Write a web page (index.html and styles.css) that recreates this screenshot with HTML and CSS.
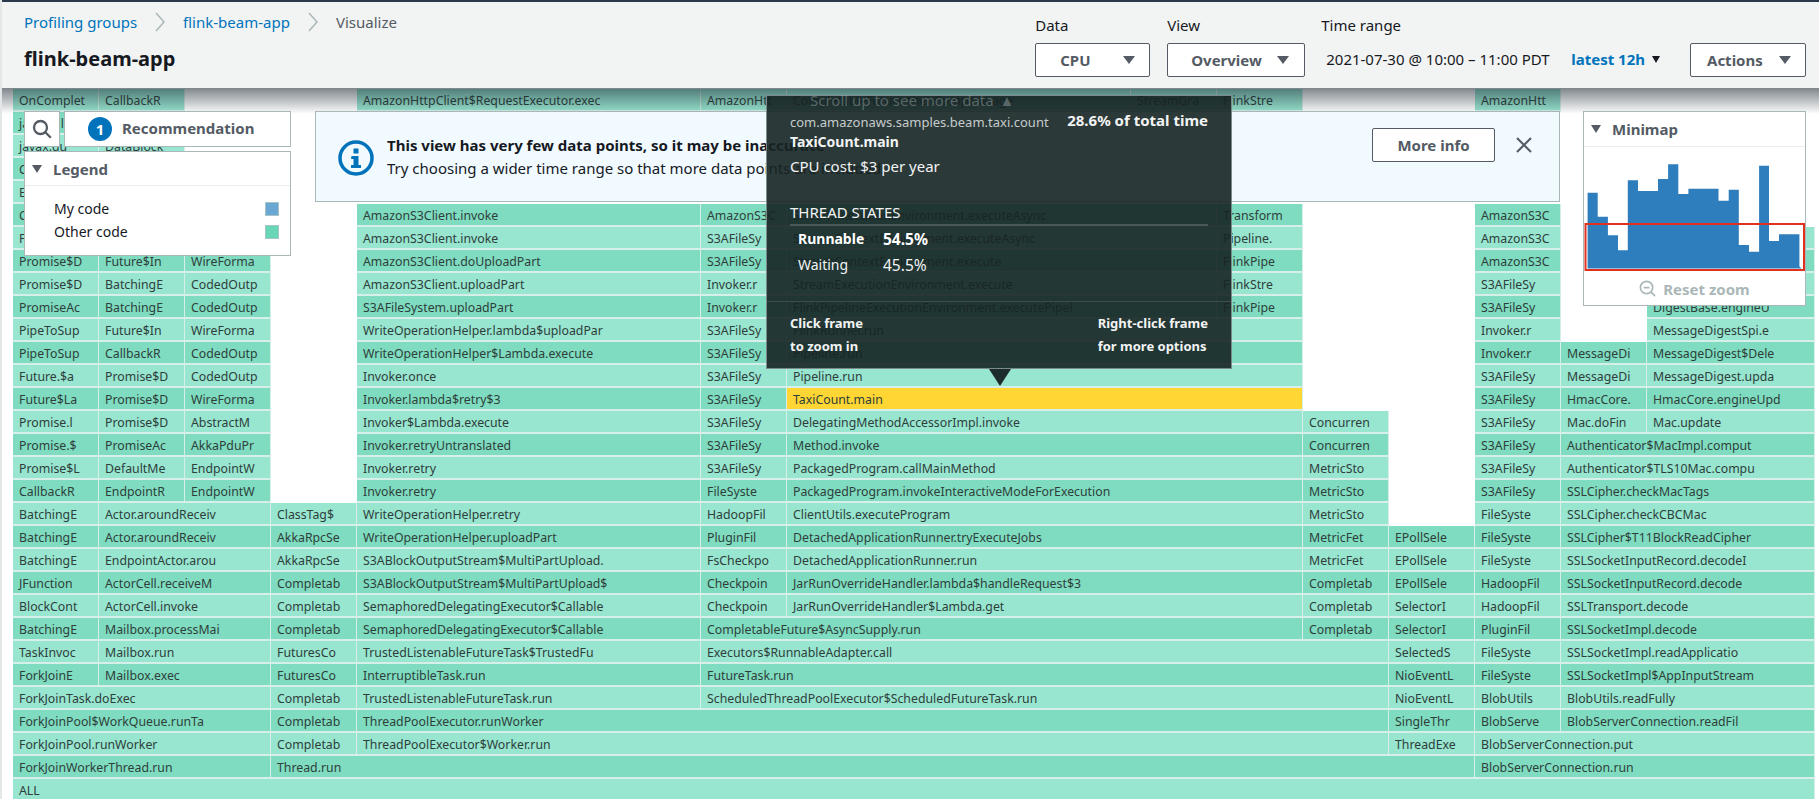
FILE: index.html
```html
<!DOCTYPE html>
<html lang="en">
<head>
  <meta charset="UTF-8" />
  <title>flink-beam-app</title>
  <link rel="stylesheet" href="styles.css">
</head>
<body>

  <header class="top">
    <div class="top-left">
      <nav class="crumbs">
        <a href="#">Profiling groups</a>
        <svg class="chev" viewBox="0 0 10 20"><path d="M1 1l8 9-8 9"/></svg>
        <a href="#">flink-beam-app</a>
        <svg class="chev" viewBox="0 0 10 20"><path d="M1 1l8 9-8 9"/></svg>
        <span>Visualize</span>
      </nav>
      <h1>flink-beam-app</h1>
    </div>
    <div class="controls">
      <div class="field">
        <label>Data</label>
        <button class="btn sel-data">CPU <i class="caret"></i></button>
      </div>
      <div class="field">
        <label>View</label>
        <button class="btn sel-view">Overview <i class="caret"></i></button>
      </div>
      <div class="field">
        <label>Time range</label>
        <div class="range">
          <span class="dates">2021-07-30 @ 10:00 – 11:00 PDT</span>
          <a href="#" class="latest">latest 12h</a>
          <i class="caret dark"></i>
        </div>
      </div>
      <button class="btn actions">Actions <i class="caret"></i></button>
    </div>
  </header>

  <main class="flame">
    <div class="row"><b>OnComplet</b><b>CallbackR</b><i class="s2"></i><b>AmazonHttpClient$RequestExecutor.exec</b><b>AmazonHtt</b><b>CompletableFuture.thenCompose.age</b><b>StreamGra</b><b>FlinkStre</b><i class="s2"></i><b>AmazonHtt</b></div>
    <div class="row"><b>java.util</b><b>DataBlock</b></div>
    <div class="row"><b>javax.du</b><b>DataBlock</b></div>
    <div class="row"><b>CallbackR</b><b>Future$In</b></div>
    <div class="row"><b>EndpointW</b><b>Future$In</b></div>
    <div class="row"><b>CallbackR</b><b>Future$In</b><b>CodedOutp</b><i></i><b>AmazonS3Client.invoke</b><b>AmazonS3C</b><b class="s2">StreamExecutionEnvironment.executeAsync</b><b>Transform</b><i class="s2"></i><b>AmazonS3C</b></div>
    <div class="row"><b>Future$In</b><b>Future$In</b><b>CodedOutp</b><i></i><b>AmazonS3Client.invoke</b><b>S3AFileSy</b><b class="s2">StreamContextEnvironment.executeAsync</b><b>Pipeline.</b><i class="s2"></i><b>AmazonS3C</b><i></i><b>DigestBase</b></div>
    <div class="row"><b>Promise$D</b><b>Future$In</b><b>WireForma</b><i></i><b>AmazonS3Client.doUploadPart</b><b>S3AFileSy</b><b class="s2">StreamContextEnvironment.execute</b><b>FlinkPipe</b><i class="s2"></i><b>AmazonS3C</b><i></i><b>DigestBase</b></div>
    <div class="row"><b>Promise$D</b><b>BatchingE</b><b>CodedOutp</b><i></i><b>AmazonS3Client.uploadPart</b><b>Invoker.r</b><b class="s2">StreamExecutionEnvironment.execute</b><b>FlinkStre</b><i class="s2"></i><b>S3AFileSy</b><i></i><b>DigestBase</b></div>
    <div class="row"><b>PromiseAc</b><b>BatchingE</b><b>CodedOutp</b><i></i><b>S3AFileSystem.uploadPart</b><b>Invoker.r</b><b class="s2">FlinkPipelineExecutionEnvironment.executePipel</b><b>FlinkPipe</b><i class="s2"></i><b>S3AFileSy</b><i></i><b>DigestBase.engineU</b></div>
    <div class="row"><b>PipeToSup</b><b>Future$In</b><b>WireForma</b><i></i><b>WriteOperationHelper.lambda$uploadPar</b><b>S3AFileSy</b><b class="s3">FlinkRunner.run</b><i class="s2"></i><b>Invoker.r</b><i></i><b>MessageDigestSpi.e</b></div>
    <div class="row"><b>PipeToSup</b><b>CallbackR</b><b>CodedOutp</b><i></i><b>WriteOperationHelper$Lambda.execute</b><b>S3AFileSy</b><b class="s3">Pipeline.run</b><i class="s2"></i><b>Invoker.r</b><b>MessageDi</b><b>MessageDigest$Dele</b></div>
    <div class="row"><b>Future.$a</b><b>Promise$D</b><b>CodedOutp</b><i></i><b>Invoker.once</b><b>S3AFileSy</b><b class="s3">Pipeline.run</b><i class="s2"></i><b>S3AFileSy</b><b>MessageDi</b><b>MessageDigest.upda</b></div>
    <div class="row"><b>Future$La</b><b>Promise$D</b><b>WireForma</b><i></i><b>Invoker.lambda$retry$3</b><b>S3AFileSy</b><b class="s3 hit">TaxiCount.main</b><i class="s2"></i><b>S3AFileSy</b><b>HmacCore.</b><b>HmacCore.engineUpd</b></div>
    <div class="row"><b>Promise.l</b><b>Promise$D</b><b>AbstractM</b><i></i><b>Invoker$Lambda.execute</b><b>S3AFileSy</b><b class="s3">DelegatingMethodAccessorImpl.invoke</b><b>Concurren</b><i></i><b>S3AFileSy</b><b>Mac.doFin</b><b>Mac.update</b></div>
    <div class="row"><b>Promise.$</b><b>PromiseAc</b><b>AkkaPduPr</b><i></i><b>Invoker.retryUntranslated</b><b>S3AFileSy</b><b class="s3">Method.invoke</b><b>Concurren</b><i></i><b>S3AFileSy</b><b class="s2">Authenticator$MacImpl.comput</b></div>
    <div class="row"><b>Promise$L</b><b>DefaultMe</b><b>EndpointW</b><i></i><b>Invoker.retry</b><b>S3AFileSy</b><b class="s3">PackagedProgram.callMainMethod</b><b>MetricSto</b><i></i><b>S3AFileSy</b><b class="s2">Authenticator$TLS10Mac.compu</b></div>
    <div class="row"><b>CallbackR</b><b>EndpointR</b><b>EndpointW</b><i></i><b>Invoker.retry</b><b>FileSyste</b><b class="s3">PackagedProgram.invokeInteractiveModeForExecution</b><b>MetricSto</b><i></i><b>S3AFileSy</b><b class="s2">SSLCipher.checkMacTags</b></div>
    <div class="row"><b>BatchingE</b><b class="s2">Actor.aroundReceiv</b><b>ClassTag$</b><b>WriteOperationHelper.retry</b><b>HadoopFil</b><b class="s3">ClientUtils.executeProgram</b><b>MetricSto</b><i></i><b>FileSyste</b><b class="s2">SSLCipher.checkCBCMac</b></div>
    <div class="row"><b>BatchingE</b><b class="s2">Actor.aroundReceiv</b><b>AkkaRpcSe</b><b>WriteOperationHelper.uploadPart</b><b>PluginFil</b><b class="s3">DetachedApplicationRunner.tryExecuteJobs</b><b>MetricFet</b><b>EPollSele</b><b>FileSyste</b><b class="s2">SSLCipher$T11BlockReadCipher</b></div>
    <div class="row"><b>BatchingE</b><b class="s2">EndpointActor.arou</b><b>AkkaRpcSe</b><b>S3ABlockOutputStream$MultiPartUpload.</b><b>FsCheckpo</b><b class="s3">DetachedApplicationRunner.run</b><b>MetricFet</b><b>EPollSele</b><b>FileSyste</b><b class="s2">SSLSocketInputRecord.decodeI</b></div>
    <div class="row"><b>JFunction</b><b class="s2">ActorCell.receiveM</b><b>Completab</b><b>S3ABlockOutputStream$MultiPartUpload$</b><b>Checkpoin</b><b class="s3">JarRunOverrideHandler.lambda$handleRequest$3</b><b>Completab</b><b>EPollSele</b><b>HadoopFil</b><b class="s2">SSLSocketInputRecord.decode</b></div>
    <div class="row"><b>BlockCont</b><b class="s2">ActorCell.invoke</b><b>Completab</b><b>SemaphoredDelegatingExecutor$Callable</b><b>Checkpoin</b><b class="s3">JarRunOverrideHandler$Lambda.get</b><b>Completab</b><b>SelectorI</b><b>HadoopFil</b><b class="s2">SSLTransport.decode</b></div>
    <div class="row"><b>BatchingE</b><b class="s2">Mailbox.processMai</b><b>Completab</b><b>SemaphoredDelegatingExecutor$Callable</b><b class="s4">CompletableFuture$AsyncSupply.run</b><b>Completab</b><b>SelectorI</b><b>PluginFil</b><b class="s2">SSLSocketImpl.decode</b></div>
    <div class="row"><b>TaskInvoc</b><b class="s2">Mailbox.run</b><b>FuturesCo</b><b>TrustedListenableFutureTask$TrustedFu</b><b class="s5">Executors$RunnableAdapter.call</b><b>SelectedS</b><b>FileSyste</b><b class="s2">SSLSocketImpl.readApplicatio</b></div>
    <div class="row"><b>ForkJoinE</b><b class="s2">Mailbox.exec</b><b>FuturesCo</b><b>InterruptibleTask.run</b><b class="s5">FutureTask.run</b><b>NioEventL</b><b>FileSyste</b><b class="s2">SSLSocketImpl$AppInputStream</b></div>
    <div class="row"><b class="s3">ForkJoinTask.doExec</b><b>Completab</b><b>TrustedListenableFutureTask.run</b><b class="s5">ScheduledThreadPoolExecutor$ScheduledFutureTask.run</b><b>NioEventL</b><b>BlobUtils</b><b class="s2">BlobUtils.readFully</b></div>
    <div class="row"><b class="s3">ForkJoinPool$WorkQueue.runTa</b><b>Completab</b><b class="s6">ThreadPoolExecutor.runWorker</b><b>SingleThr</b><b>BlobServe</b><b class="s2">BlobServerConnection.readFil</b></div>
    <div class="row"><b class="s3">ForkJoinPool.runWorker</b><b>Completab</b><b class="s6">ThreadPoolExecutor$Worker.run</b><b>ThreadExe</b><b class="s3">BlobServerConnection.put</b></div>
    <div class="row"><b class="s3">ForkJoinWorkerThread.run</b><b class="s8">Thread.run</b><b class="s3">BlobServerConnection.run</b></div>
    <div class="row"><b class="s14">ALL</b></div>
  </main>

  <div class="shade"></div>

  <div class="float-left">
    <div class="float-top">
      <button class="box search">
        <svg viewBox="0 0 20 20" width="20" height="20"><circle cx="8.500" cy="8.500" r="6.500"/><path d="M13.300 13.300l5.500 5.500"/></svg>
      </button>
      <div class="box reco"><span class="count">1</span><span class="reco-text">Recommendation</span></div>
    </div>
    <section class="box legend">
      <div class="panel-head"><i class="caret"></i>Legend</div>
      <div class="legend-body">
        <div class="legend-row">My code<i class="swatch mine"></i></div>
        <div class="legend-row">Other code<i class="swatch other"></i></div>
      </div>
    </section>
  </div>

  <div class="banner">
    <svg class="info" viewBox="0 0 36 36" width="36" height="36">
      <circle cx="18" cy="18" r="16" />
      <rect x="15.500" y="8.500" width="5" height="5" />
      <path d="M13.500 16h7v9h2.500v3h-10v-3h2.500v-6h-2.500z" />
    </svg>
    <div class="banner-text">
      <strong>This view has very few data points, so it may be inaccurate</strong>
      <span>Try choosing a wider time range so that more data points are included.</span>
    </div>
    <button class="btn more">More info</button>
    <svg class="close" viewBox="0 0 16 16" width="16" height="16"><path d="M1 1l14 14M15 1L1 15"/></svg>
  </div>

  <div class="tip">
    <div class="tip-main">
      <div class="tip-head">
        <span class="tip-pkg">com.amazonaws.samples.beam.taxi.count</span>
        <span class="tip-pct">28.6% of total time</span>
      </div>
      <div class="tip-name">TaxiCount.main</div>
      <div class="tip-cost">CPU cost: $3 per year</div>
      <div class="tip-states">THREAD STATES</div>
      <div class="tip-state on"><span>Runnable</span><span class="tip-val">54.5%</span></div>
      <div class="tip-state"><span>Waiting</span><span class="tip-val">45.5%</span></div>
    </div>
    <div class="tip-foot">
      <span>Click frame<br>to zoom in</span>
      <span>Right-click frame<br>for more options</span>
    </div>
  </div>

  <div class="scroll-note">Scroll up to see more data <span class="up">▲</span></div>

  <section class="box minimap">
    <div class="panel-head"><i class="caret"></i>Minimap</div>
    <div class="map">
      <svg viewBox="0 0 222 125" width="222" height="125">
        <path class="bars" d="M3.600 121.500V45.700H13.700V69.700H23.900V88.300H34V103.300H43.800V33.300H54V44H74V32H84.100V17.300H94.300V47H104.400V41.700H134.500V53.700H144.700V42.700H154.800V98H165V104.700H175.100V18.700H185V94H195V87.300H215.400V119.500L217.500 121.500Z"/>
        <rect class="zoomed" x="1.500" y="77" width="218.500" height="46"/>
      </svg>
    </div>
    <div class="reset">
      <svg viewBox="0 0 18 18" width="17" height="17"><circle cx="8" cy="8" r="6.500"/><path d="M12.800 12.800L17 17M5 8h6"/></svg>
      Reset zoom
    </div>
  </section>

</body>
</html>
```

FILE: styles.css
```css
* {
  box-sizing: border-box;
}

html, body {
  height: 100%;
}

body {
  margin: 0;
  height: 799px;
  overflow: hidden;
  position: relative;
  background: #fff;
  font-family: "Noto Sans", sans-serif;
  font-size: 15px;
  color: #16191f;
  border-left: 2px solid #e4e7e7;
}

/* header */

.top {
  height: 88px;
  display: flex;
  justify-content: space-between;
  background: #f2f3f3;
  border-top: 2px solid #2a3a4c;
  padding: 0 13px 0 22px;
  position: relative;
  z-index: 3;
}

.crumbs {
  display: flex;
  align-items: center;
  gap: 18px;
  height: 20px;
  margin-top: 10px;
  color: #545b64;
}

.crumbs a, .latest {
  color: #0073bb;
  text-decoration: none;
}

.chev {
  width: 10px;
  height: 20px;
  fill: none;
  stroke: #aab7b8;
  stroke-width: 1.500;
}

h1 {
  margin: 15px 0 0;
  font-size: 20px;
  font-weight: 700;
  line-height: 24px;
}

.controls {
  display: flex;
  align-items: flex-start;
}

.field {
  margin-right: 16px;
}

.field:first-child {
  margin-right: 17px;
}

.field label {
  display: block;
  height: 18px;
  margin: 14px 0 9px;
  line-height: 18px;
}

.btn {
  height: 34px;
  background: #fff;
  border: 1px solid #545b64;
  border-radius: 2px;
  font: 700 15px "Noto Sans", sans-serif;
  color: #545b64;
}

.sel-data, .sel-view, .actions {
  display: flex;
  align-items: center;
  justify-content: space-between;
}

.sel-data {
  width: 115px;
  padding: 0 14px 0 24px;
}

.sel-view {
  width: 138px;
  padding: 0 15px 0 23px;
}

.actions {
  width: 116px;
  margin: 41px 0 0 14px;
  padding: 0 14px 0 16px;
}

.caret {
  display: inline-block;
  width: 0;
  height: 0;
  border-left: 6px solid transparent;
  border-right: 6px solid transparent;
  border-top: 8px solid #545b64;
}

.caret.dark {
  border-left-width: 4.500px;
  border-right-width: 4.500px;
  border-top: 7px solid #16191f;
}

.range {
  display: flex;
  align-items: center;
  height: 32px;
  padding-left: 5px;
}

.dates {
  width: 245px;
}

.latest {
  font-weight: 700;
  margin-right: 7px;
}

/* flame graph */

.flame {
  margin-left: 11px;
  padding-top: 1px;
  width: 1802px;
}

.row {
  display: grid;
  grid-template-columns: repeat(4, 86px) 344px 86px 344px repeat(6, 86px) 168px;
  height: 23px;
}

.row b {
  display: block;
  overflow: hidden;
  white-space: nowrap;
  height: 23px;
  padding-left: 6px;
  font-size: 12.300px;
  font-weight: 400;
  line-height: 23px;
  color: #2e3f3b;
  background: #98e5d0;
  border-right: 1px solid #d6efe8;
  border-bottom: 2px solid #d6efe8;
}

.row:nth-child(even) b {
  background: #7fdcc0;
}

.flame .row b.hit {
  background: #ffd633;
}

.row .s2 { grid-column: span 2; }
.row .s3 { grid-column: span 3; }
.row .s4 { grid-column: span 4; }
.row .s5 { grid-column: span 5; }
.row .s6 { grid-column: span 6; }
.row .s8 { grid-column: span 8; }
.row .s14 { grid-column: span 14; }

.shade {
  position: absolute;
  left: 0;
  right: 0;
  top: 88px;
  height: 26px;
  background: linear-gradient(rgba(22, 35, 45, .55), rgba(22, 35, 45, 0));
  z-index: 1;
}

/* floating panels */

.box {
  background: #fff;
  border: 1px solid #aab7b8;
}

.float-left {
  position: absolute;
  left: 22px;
  top: 111px;
  width: 267px;
  z-index: 2;
}

.float-top {
  display: flex;
  gap: 4px;
  margin-bottom: 4px;
}

.search {
  width: 36px;
  height: 36px;
  display: flex;
  align-items: center;
  justify-content: center;
  padding: 0;
}

.search svg {
  fill: none;
  stroke: #545b64;
  stroke-width: 2.300;
}

.reco {
  width: 227px;
  height: 36px;
  display: flex;
  align-items: center;
  padding-left: 23px;
}

.count {
  width: 24px;
  height: 24px;
  border-radius: 50%;
  background: #0073bb;
  color: #fff;
  font-weight: 700;
  text-align: center;
  line-height: 24px;
}

.reco-text {
  margin: -2px 0 0 10px;
  font-weight: 700;
  color: #545b64;
}

.panel-head {
  display: flex;
  align-items: center;
  height: 34px;
  font-weight: 700;
  color: #545b64;
  border-bottom: 1px solid #eaeded;
}

.minimap .panel-head {
  height: 35px;
}

.panel-head .caret {
  margin: 0 11px 0 7px;
  border-left-width: 5px;
  border-right-width: 5px;
}

.legend-body {
  padding: 11px 11px 0 29px;
  height: 69px;
  font-size: 14px;
}

.legend-row {
  display: flex;
  justify-content: space-between;
  align-items: center;
  height: 23px;
}

.swatch {
  width: 14px;
  height: 14px;
  border: 1px solid #a9c4c4;
}

.mine {
  background: #6aa8d3;
}

.other {
  background: #67d6b8;
}

.banner {
  position: absolute;
  left: 313px;
  top: 111px;
  width: 1245px;
  height: 91px;
  display: flex;
  align-items: flex-start;
  background: #f1faff;
  border: 1px solid #aab7b8;
  padding: 16px 14px 0 22px;
  z-index: 2;
}

.info {
  margin-top: 12px;
}

.info circle {
  fill: none;
  stroke: #0073bb;
  stroke-width: 3.500;
}

.info rect, .info path {
  fill: #0073bb;
}

.banner-text {
  flex: 1;
  margin: 6px 0 0 13px;
  line-height: 23px;
}

.banner-text strong, .banner-text span {
  display: block;
}

.more {
  width: 123px;
}

.close {
  margin: 9px 13px 0 21px;
  fill: none;
  stroke: #545b64;
  stroke-width: 2;
}

.minimap {
  position: absolute;
  left: 1581px;
  top: 111px;
  width: 223px;
  height: 195px;
  z-index: 2;
}

.map {
  height: 125px;
}

.bars {
  fill: #2e7dbd;
}

.zoomed {
  fill: none;
  stroke: #e0301e;
  stroke-width: 2;
}

.reset {
  display: flex;
  align-items: center;
  justify-content: center;
  gap: 7px;
  height: 33px;
  font-weight: 700;
  color: #aab7b8;
}

.reset svg {
  fill: none;
  stroke: #aab7b8;
  stroke-width: 1.800;
}

/* hover tooltip */

.scroll-note {
  position: absolute;
  left: 808px;
  top: 88px;
  line-height: 24px;
  color: rgba(205, 215, 215, .35);
  z-index: 5;
}

.up {
  margin-left: 2px;
}

.tip {
  position: absolute;
  left: 764px;
  top: 95px;
  width: 466px;
  height: 274px;
  background: rgba(22, 35, 35, .9);
  border: 1px solid #7d8a8a;
  color: #f2f3f3;
  font-size: 15px;
  z-index: 4;
}

.tip::after {
  content: "";
  position: absolute;
  left: 222px;
  bottom: -18px;
  border-left: 11px solid transparent;
  border-right: 11px solid transparent;
  border-top: 17px solid rgba(22, 35, 35, .95);
}

.tip-main {
  height: 206px;
  padding: 14px 23px 0;
  border-bottom: 1px solid #3f4b4b;
}

.tip-head {
  display: flex;
  justify-content: space-between;
  align-items: flex-start;
}

.tip-pkg {
  font-size: 13px;
  margin-top: 3px;
  color: #c5cccc;
}

.tip-pct {
  font-weight: 700;
}

.tip-name {
  font-size: 14px;
  font-weight: 700;
  line-height: 22px;
}

.tip-cost {
  margin-top: 2px;
  line-height: 22px;
}

.tip-states {
  margin-top: 25px;
  padding-bottom: 2px;
  border-bottom: 2px solid #4b5757;
  line-height: 20px;
}

.tip-state {
  display: flex;
  padding-left: 8px;
  height: 26px;
  font-size: 14px;
  line-height: 26px;
}

.tip-state span:first-child {
  width: 85px;
}

.tip-val {
  font-size: 15.500px;
}

.tip-state.on {
  font-weight: 700;
  color: #fff;
}

.tip-foot {
  display: flex;
  justify-content: space-between;
  padding: 10px 23px 0;
  font-size: 13px;
  font-weight: 700;
  line-height: 23px;
}
```
